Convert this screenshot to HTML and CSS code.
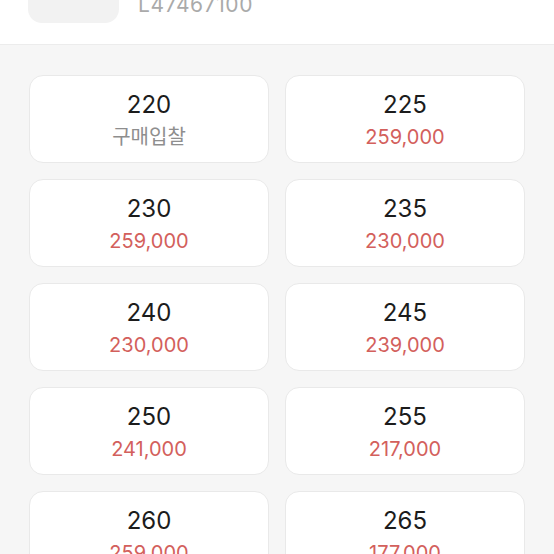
FILE: index.html
```html
<!DOCTYPE html>
<html lang="ko">
<head>
  <meta charset="UTF-8" />
  <meta name="viewport" content="width=device-width, initial-scale=1" />
  <title>사이즈 선택</title>
  <link rel="stylesheet" href="styles.css">
</head>
<body>
  <div class="product-head">
    <div class="product-thumb"></div>
    <div class="product-code">L47467100</div>
  </div>

  <div class="size-grid">
    <div class="size-card"><div class="size">220</div><div class="price bid">구매입찰</div></div>
    <div class="size-card"><div class="size">225</div><div class="price">259,000</div></div>
    <div class="size-card"><div class="size">230</div><div class="price">259,000</div></div>
    <div class="size-card"><div class="size">235</div><div class="price">230,000</div></div>
    <div class="size-card"><div class="size">240</div><div class="price">230,000</div></div>
    <div class="size-card"><div class="size">245</div><div class="price">239,000</div></div>
    <div class="size-card"><div class="size">250</div><div class="price">241,000</div></div>
    <div class="size-card"><div class="size">255</div><div class="price">217,000</div></div>
    <div class="size-card"><div class="size">260</div><div class="price">259,000</div></div>
    <div class="size-card"><div class="size">265</div><div class="price">177,000</div></div>
  </div>
</body>
</html>
```

FILE: styles.css
```css
html, body {
  margin: 0;
  padding: 0;
}

body {
  background: #f6f6f6;
  font-family: Inter, "Noto Sans CJK KR", sans-serif;
  width: 554px;
  height: 554px;
  overflow: hidden;
}

.product-head {
  background: #fff;
  height: 44px;
  border-bottom: 1px solid #ececec;
  display: flex;
  align-items: flex-start;
  padding-left: 28px;
  overflow: hidden;
}

.product-thumb {
  width: 91px;
  height: 70px;
  margin-top: -47px;
  background: #f2f2f2;
  border-radius: 14px;
  flex-shrink: 0;
}

.product-code {
  margin-left: 19px;
  margin-top: -9px;
  font-size: 21px;
  line-height: 28px;
  color: #aaaaaa;
  letter-spacing: 0.6px;
}

.size-grid {
  display: grid;
  grid-template-columns: 240px 240px;
  gap: 16px;
  padding: 30px 29px 0 29px;
}

.size-card {
  background: #fff;
  border: 1px solid #e9e9e9;
  border-radius: 14px;
  height: 88px;
  box-sizing: border-box;
  padding-top: 14px;
  text-align: center;
}

.size {
  font-size: 24px;
  line-height: 30px;
  color: #1c1c1c;
}

.price {
  margin-top: 4px;
  font-size: 20px;
  line-height: 26px;
  color: #d3605c;
}

.price.bid {
  color: #8e8e8e;
}
```
